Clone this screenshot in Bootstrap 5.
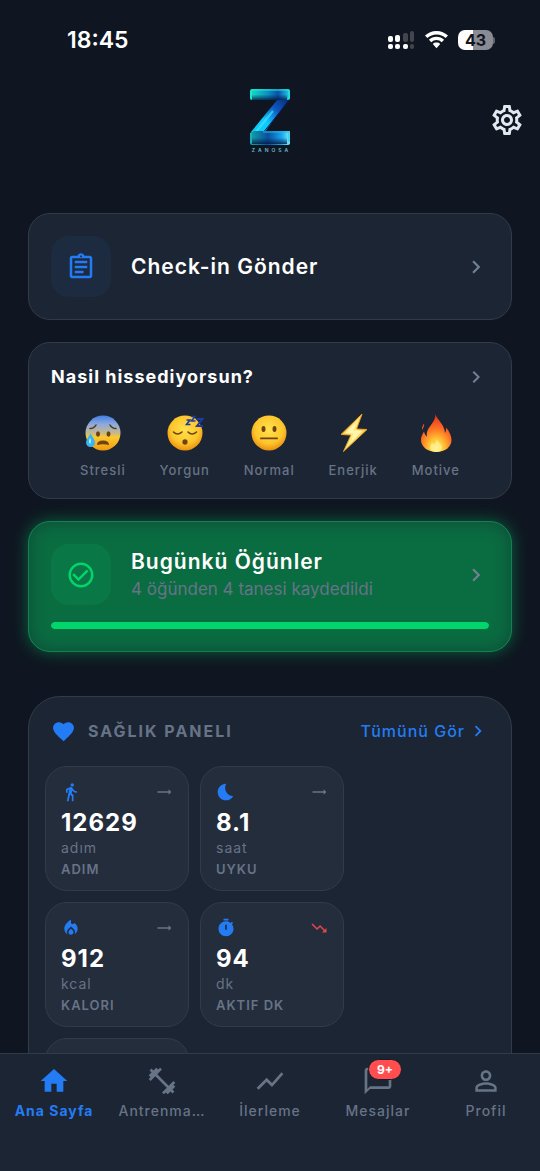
<!DOCTYPE html>
<html lang="tr">
<head>
<meta charset="utf-8">
<meta name="viewport" content="width=device-width, initial-scale=1">
<title>Zanosa</title>
<link rel="stylesheet" href="https://cdn.jsdelivr.net/npm/bootstrap@5.3.0/dist/css/bootstrap.min.css">
<style>
:root { --page: #0f1621; --panel: #1c2533; --tile: #232d3c; --line: #313c49; --muted: #677387; --blue: #247cf4; --green: #00d66b; }
body { background: var(--page); color: #fff; font-family: Inter, "Liberation Sans", sans-serif; }
a { color: inherit; text-decoration: none; }
svg { display: block; flex: none; fill: currentColor; }
.muted { color: var(--muted); }
.blue { color: var(--blue); }
.status { height: 80px; padding: 0 45px 0 67px; font-size: 23px; font-weight: 600; }
.battery { width: 35px; height: 20px; border-radius: 7px; background: linear-gradient(90deg, #fff 43%, #8b8c93 43%); color: #10161f; font-size: 16px; line-height: 20px; font-weight: 700; text-align: center; }
.nub { width: 2px; height: 7px; border-radius: 0 3px 3px 0; background: #60636b; }
.topbar { height: 80px; padding: 0 15px; }
.brand-name { font-size: 5px; line-height: 6px; letter-spacing: 3px; padding-left: 3px; color: #6fbccb; font-weight: 600; }
.gear { color: #e3e7f0; background: none; border: 0; padding: 0; }
main { padding: 53px 28px 0; scrollbar-width: none; }
main::-webkit-scrollbar { display: none; }
.box { display: block; background: var(--panel); border: 1px solid var(--line); border-radius: 22px; padding: 22px; }
.gap-box { gap: 22px; }
.glyph { width: 60px; height: 61px; border-radius: 18px; background: #1c2b40; color: var(--blue); }
.gap-glyph { gap: 20px; }
.go { color: #728095; }
.title { font-size: 21px; line-height: 28px; font-weight: 600; letter-spacing: 1px; }
.feel { padding-bottom: 20px; }
.ask { font-size: 18px; line-height: 24px; font-weight: 700; letter-spacing: 1px; }
.moods { margin-top: 26px; padding: 0 29px; }
.mood { background: none; border: 0; padding: 0; font-size: 13px; line-height: 16px; font-weight: 500; letter-spacing: 1px; color: var(--muted); gap: 11px; }
.meals { background: #0a6c41; border-color: #118350; box-shadow: 0 0 16px rgba(0,214,107,.4), inset 0 0 16px rgba(20,50,50,.6); }
.meals .glyph { background: #0a7846; color: var(--green); }
.sub { font-size: 17px; line-height: 26px; }
.meals .progress { height: 7px; margin-top: 17px; border-radius: 4px; background: #0d5b3a; }
.meals .progress-bar { background: var(--green); border-radius: 4px; }
.health { border-radius: 32px; padding: 16px; margin-top: 22px; }
.health-head { height: 36px; margin-bottom: 17px; padding: 0 6px; }
.health-title { font-size: 16px; line-height: 24px; font-weight: 700; letter-spacing: 2px; margin: 0; }
.all { font-size: 16px; line-height: 24px; font-weight: 500; letter-spacing: 1px; gap: 2px; }
.tiles { gap: 11px; }
.stat { width: 144px; height: 125px; background: var(--tile); border: 1px solid var(--line); border-radius: 22px; padding: 15px; }
.num { font-size: 24px; line-height: 32px; font-weight: 700; letter-spacing: 1px; margin-top: 5px; }
.unit { font-size: 14px; line-height: 18px; letter-spacing: 1px; }
.kind { font-size: 13px; line-height: 18px; margin-top: 3px; font-weight: 600; letter-spacing: 1px; }
.tabs { height: 118px; background: var(--panel); border-top: 1px solid var(--line); padding-top: 11px; }
.tab { flex: 1 1 0; min-width: 0; color: var(--muted); font-size: 14px; line-height: 18px; font-weight: 500; letter-spacing: 1px; gap: 5px; padding: 0 8px; }
.tab.active { color: var(--blue); font-weight: 700; }
.count { position: absolute; left: 6px; top: -6px; height: 21px; padding: 0 8px; border: 1px solid #161c28; border-radius: 11px; background: #ff4d50; color: #fff; font-size: 12px; line-height: 19px; font-weight: 700; letter-spacing: 0; }
</style>
</head>
<body>
<div class="vh-100 d-flex flex-column overflow-hidden">
  <div class="status d-flex align-items-center justify-content-between flex-shrink-0">
    <span>18:45</span>
    <div class="d-flex align-items-center">
      <svg width="27" height="20" viewBox="0 0 27 20"><g><rect x="0" y="6" width="5" height="6" rx="2"/><rect x="7" y="5" width="5" height="7" rx="2"/><rect x="0" y="14" width="5" height="5" rx="2"/><rect x="7" y="14" width="5" height="5" rx="2"/><rect x="15" y="14" width="5" height="5" rx="2"/></g><g fill="#41464f"><rect x="15" y="3" width="5" height="9" rx="2"/><rect x="22" y="1" width="4" height="11" rx="2"/><rect x="22" y="14" width="4" height="5" rx="2"/></g></svg>
      <svg class="ms-2 me-2" width="27" height="20" viewBox="0 0 27 20"><path d="M13.500 1C9 1 5 2.700 2 5.600l2.400 2.500a13 13 0 0 1 18.200 0L25 5.600C22 2.700 18 1 13.500 1zM13.500 6.700c-3 0-5.600 1.200-7.600 3.100l2.400 2.400a7.500 7.500 0 0 1 10.400 0l2.400-2.400c-2-1.900-4.600-3.100-7.600-3.100zM13.500 12.500c-1.500 0-2.700.5-3.700 1.400l3.700 4.400 3.700-4.400c-1-.9-2.200-1.400-3.700-1.400z"/></svg>
      <span class="battery">43</span><span class="nub ms-auto"></span>
    </div>
  </div>

  <header class="topbar d-flex align-items-center flex-shrink-0">
    <div class="col"></div>
    <div class="d-flex flex-column align-items-center">
      <svg width="42" height="59" viewBox="0 0 42 59">
        <defs>
          <linearGradient id="zt"><stop offset="0" stop-color="#16e0c4"/><stop offset=".45" stop-color="#0c8fc0"/><stop offset=".7" stop-color="#0b50a8"/><stop offset="1" stop-color="#22d3f2"/></linearGradient>
          <linearGradient id="zd" x1="0" y1="1" x2="1" y2="0"><stop offset="0" stop-color="#0ccdf0"/><stop offset=".4" stop-color="#12c8ff"/><stop offset=".7" stop-color="#0d55bd"/><stop offset="1" stop-color="#082a78"/></linearGradient>
          <linearGradient id="zb"><stop offset="0" stop-color="#12a5a5"/><stop offset=".45" stop-color="#0a4fa0"/><stop offset=".8" stop-color="#19a8ee"/><stop offset="1" stop-color="#7ff0ff"/></linearGradient>
          <linearGradient id="zs" x1="0" y1="0" x2="0" y2="1"><stop offset=".3" stop-color="#03143d" stop-opacity="0"/><stop offset="1" stop-color="#03143d" stop-opacity=".8"/></linearGradient>
        </defs>
        <path fill="url(#zd)" d="M29 11h11L15 45 2 49v-5z"/>
        <path fill="none" stroke="#0a1a58" stroke-width="1" d="M39 14 13 46"/>
        <path fill="none" stroke="#39e6ff" stroke-opacity=".7" stroke-width="2" d="M24 23 6 45"/>
        <rect x="1" y="1" width="40" height="11" rx="2" fill="url(#zt)"/>
        <rect x="3" y="4" width="35" height="8" fill="url(#zs)"/>
        <path fill="none" stroke="#1ff0d8" d="M2 11V3q0-1 1-1h36q1 0 1 1v8"/>
        <path fill="url(#zb)" d="M5 43h35q1 0 1 1v11q0 2-2 2H3q-2 0-2-2V45z"/>
        <path fill="url(#zs)" d="M3 47h35v9H3z"/>
        <path fill="none" stroke="#20b9dd" d="M14 44h26v10M2 45v10"/>
      </svg>
      <span class="brand-name">ZANOSA</span>
    </div>
    <div class="col d-flex justify-content-end">
      <button class="gear" type="button" aria-label="Ayarlar"><svg width="36" height="36" viewBox="0 0 24 24"><path d="M19.430 12.980c.04-.32.07-.64.07-.98 0-.34-.03-.66-.07-.98l2.110-1.650c.19-.15.24-.42.12-.64l-2-3.460c-.09-.16-.26-.25-.44-.25-.06 0-.12.01-.17.03l-2.490 1c-.52-.4-1.080-.73-1.690-.98l-.38-2.650C14.460 2.180 14.250 2 14 2h-4c-.25 0-.46.18-.49.42l-.38 2.650c-.61.25-1.170.59-1.690.98l-2.490-1c-.06-.02-.12-.03-.18-.03-.17 0-.34.09-.43.25l-2 3.460c-.13.22-.07.49.12.64l2.110 1.650c-.04.32-.07.65-.07.98 0 .33.03.66.07.98l-2.110 1.650c-.19.15-.24.42-.12.64l2 3.460c.09.16.26.25.44.25.06 0 .12-.01.17-.03l2.490-1c.52.4 1.080.73 1.690.98l.38 2.650c.03.24.24.42.49.42h4c.25 0 .46-.18.49-.42l.38-2.650c.61-.25 1.170-.59 1.690-.98l2.490 1c.06.02.12.03.18.03.17 0 .34-.09.43-.25l2-3.460c.12-.22.07-.49-.12-.64l-2.110-1.650zm-1.980-1.710c.04.31.05.52.05.73 0 .21-.02.43-.05.73l-.14 1.130.89.7 1.080.84-.7 1.210-1.270-.51-1.040-.42-.9.68c-.43.32-.84.56-1.250.73l-1.060.43-.16 1.130-.2 1.350h-1.400l-.19-1.350-.16-1.130-1.060-.43c-.43-.18-.83-.41-1.230-.71l-.91-.7-1.060.43-1.270.51-.7-1.210 1.080-.84.89-.7-.14-1.130c-.03-.31-.05-.54-.05-.74s.02-.43.05-.73l.14-1.130-.89-.7-1.080-.84.7-1.210 1.270.51 1.040.42.9-.68c.43-.32.84-.56 1.250-.73l1.060-.43.16-1.130.2-1.350h1.390l.19 1.350.16 1.130 1.060.43c.43.18.83.41 1.230.71l.91.7 1.060-.43 1.270-.51.7 1.210-1.070.85-.89.7.14 1.130zM12 8c-2.210 0-4 1.790-4 4s1.790 4 4 4 4-1.790 4-4-1.790-4-4-4zm0 6c-1.100 0-2-.9-2-2s.9-2 2-2 2 .9 2 2-.9 2-2 2z"/></svg></button>
    </div>
  </header>

  <main class="flex-grow-1 overflow-auto">
    <div class="d-flex flex-column gap-box">
      <a href="#" class="box">
        <div class="d-flex align-items-center gap-glyph">
          <span class="glyph d-flex align-items-center justify-content-center"><svg width="30" height="30" viewBox="0 0 24 24"><path d="M7 15h7v2H7zm0-4h10v2H7zm0-4h10v2H7zm12-4h-4.180C14.400 1.840 13.300 1 12 1c-1.300 0-2.400.84-2.820 2H5c-.14 0-.27.01-.4.04-.39.08-.74.28-1.010.55-.18.18-.33.4-.43.64-.1.23-.16.49-.16.77v14c0 .27.06.54.16.78s.25.45.43.64c.27.27.62.47 1.010.55.13.02.26.03.4.03h14c1.100 0 2-.9 2-2V5c0-1.100-.9-2-2-2zm-7-.25c.41 0 .75.34.75.75s-.34.75-.75.75-.75-.34-.75-.75.34-.75.75-.75zM19 19H5V5h14v14z"/></svg></span>
          <span class="title flex-grow-1">Check-in Gönder</span>
          <svg class="go" width="26" height="26" viewBox="0 0 24 24"><path d="M10 6 8.590 7.410 13.170 12l-4.580 4.590L10 18l6-6z"/></svg>
        </div>
      </a>

      <section class="box feel">
        <a href="#" class="ask d-flex align-items-center justify-content-between"><span>Nasil hissediyorsun?</span>
          <svg class="go" width="26" height="24" viewBox="0 0 24 24"><path d="M10 6 8.590 7.410 13.170 12l-4.580 4.590L10 18l6-6z"/></svg></a>
        <svg width="0" height="0" class="position-absolute"><defs>
          <radialGradient id="face" cx=".5" cy=".4" r=".62"><stop offset="0" stop-color="#ffe14d"/><stop offset=".65" stop-color="#fdc52c"/><stop offset="1" stop-color="#e98a0c"/></radialGradient>
          <linearGradient id="cold" x1="0" y1="0" x2="0" y2="1"><stop offset="0" stop-color="#3f7fe8"/><stop offset=".25" stop-color="#8fa9dc"/><stop offset=".5" stop-color="#c5b88e"/><stop offset=".62" stop-color="#fdc92f"/><stop offset="1" stop-color="#f2980e"/></linearGradient>
          <linearGradient id="bolt" x1="0" y1="0" x2="1" y2="1"><stop offset="0" stop-color="#f7a81b"/><stop offset=".5" stop-color="#fff08a"/><stop offset="1" stop-color="#f29a15"/></linearGradient>
          <radialGradient id="fire" cx=".5" cy=".9" r=".85"><stop offset="0" stop-color="#fff27a"/><stop offset=".3" stop-color="#ffc234"/><stop offset=".6" stop-color="#ff7424"/><stop offset="1" stop-color="#e8321f"/></radialGradient>
        </defs></svg>
        <div class="moods d-flex justify-content-between">
          <button type="button" class="mood d-flex flex-column align-items-center">
            <svg width="36" height="36" viewBox="0 0 36 36"><circle cx="18" cy="18" r="17.500" fill="url(#cold)"/><g fill="none" stroke="#4b3a26" stroke-width="1.500" stroke-linecap="round"><path d="M5 13.500q4 0 6-3.500M25 10q2 3.500 6 3.500"/></g><g fill="#6d4310"><ellipse cx="13" cy="19" rx="2" ry="2.700"/><ellipse cx="23.500" cy="19" rx="2" ry="2.700"/><path d="M12 30q0-4.500 6-4.500t6 4.500q-6-1.500-12 0z"/></g><path fill="#39b5ef" d="M5.500 18.500q4.500 6.500 4.500 9a4.500 4.500 0 0 1-9 0q0-2.500 4.500-9z"/><path fill="#b8ecff" d="M5 23q-2 4 0 6 2-3 0-6z"/></svg>
            Stresli</button>
          <button type="button" class="mood d-flex flex-column align-items-center">
            <svg width="36" height="36" viewBox="0 0 36 36" overflow="visible"><circle cx="18" cy="18" r="17.500" fill="url(#face)"/><g fill="none" stroke="#6d4310" stroke-width="1.600" stroke-linecap="round"><path d="M6.500 17q4 4 8.500 0M21 17q4 4 8.500 0"/></g><ellipse cx="18" cy="27" rx="2.600" ry="2.800" fill="#6d4310"/><g fill="none" stroke="#1a3aa5"><path stroke-width="1.600" d="M19.500 5H23l-3.500 4.500H23.500"/><path stroke-width="1.500" d="M24.500 1.500H28l-3.500 4.500H28.500"/><path stroke-width="2" d="M29.500 4h6L30 11h6"/></g></svg>
            Yorgun</button>
          <button type="button" class="mood d-flex flex-column align-items-center">
            <svg width="36" height="36" viewBox="0 0 36 36"><circle cx="18" cy="18" r="17.500" fill="url(#face)"/><g fill="#6d4310"><ellipse cx="12.500" cy="14" rx="2" ry="3"/><ellipse cx="23.500" cy="14" rx="2" ry="3"/><rect x="9" y="22.500" width="18" height="1.800" rx=".9"/></g></svg>
            Normal</button>
          <button type="button" class="mood d-flex flex-column align-items-center">
            <svg width="36" height="36" viewBox="0 0 36 36" overflow="visible"><path fill="url(#bolt)" stroke="#f0a020" stroke-width="1" stroke-linejoin="round" d="M27-1 6 19.500 16 20 8.500 36.500 32 14.500 21.500 14z"/><path fill="#fff6b0" d="M23 5 10 18l9 .5-4 10 12-12.500h-9z"/></svg>
            Enerjik</button>
          <button type="button" class="mood d-flex flex-column align-items-center">
            <svg width="36" height="36" viewBox="0 0 36 36" overflow="visible"><path fill="url(#fire)" d="M17.500-1C18 4 26.500 9 27 18c1-1.500 1.200-3.500 1-5.500 3.500 4 5.500 8.500 5.500 12.500 0 7-6.500 12-15 12S3 32 3 25c0-3.500 1.500-6 3-8.500.5 2.500 1.500 4 3 5C7.500 12 17.500 9 17.500-1zM5.500 8.500c2 2-1 4.500-1 6.500-1.500-3 1-4 1-6.500z"/><path fill="#fff39a" opacity=".7" d="M19 24c0 3 5 5 5 8.500S21 37 18 37s-6-1.500-6-4.500c0-2 1.500-3 2-5 1 1 1.500 1.500 2 2.500 1.500-1.500 2.500-3 3-6z"/></svg>
            Motive</button>
        </div>
      </section>

      <a href="#" class="box meals">
        <div class="d-flex align-items-center gap-glyph">
          <span class="glyph d-flex align-items-center justify-content-center"><svg width="30" height="30" viewBox="0 0 24 24"><path d="M16.590 7.580 10 14.170l-3.590-3.580L5 12l5 5 8-8zM12 2C6.480 2 2 6.480 2 12s4.480 10 10 10 10-4.480 10-10S17.520 2 12 2zm0 18c-4.420 0-8-3.580-8-8s3.580-8 8-8 8 3.580 8 8-3.580 8-8 8z"/></svg></span>
          <span class="flex-grow-1"><span class="title d-block">Bugünkü Öğünler</span><span class="sub muted d-block">4 öğünden 4 tanesi kaydedildi</span></span>
          <svg class="go" width="26" height="26" viewBox="0 0 24 24"><path d="M10 6 8.590 7.410 13.170 12l-4.580 4.590L10 18l6-6z"/></svg>
        </div>
        <div class="progress" role="progressbar" aria-label="Öğünler" aria-valuenow="4" aria-valuemin="0" aria-valuemax="4"><div class="progress-bar w-100"></div></div>
      </a>

      <section class="box health">
        <div class="health-head d-flex align-items-center">
          <svg class="blue" width="25" height="25" viewBox="0 0 24 24"><path d="M12 21.350l-1.450-1.320C5.400 15.360 2 12.280 2 8.500 2 5.420 4.420 3 7.500 3c1.740 0 3.410.81 4.500 2.090C13.090 3.810 14.760 3 16.500 3 19.580 3 22 5.420 22 8.500c0 3.780-3.400 6.860-8.550 11.540L12 21.350z"/></svg>
          <h2 class="health-title muted ms-2 ps-1">SAĞLIK PANELI</h2>
          <a href="#" class="all blue ms-auto d-flex align-items-center">Tümünü Gör
            <svg width="22" height="22" viewBox="0 0 24 24"><path d="M10 6 8.590 7.410 13.170 12l-4.580 4.590L10 18l6-6z"/></svg></a>
        </div>
        <div class="tiles d-flex flex-wrap">
          <div class="stat">
            <div class="d-flex align-items-center justify-content-between"><svg class="blue" width="20" height="20" viewBox="0 0 24 24"><path d="M13.500 5.500c1.100 0 2-.9 2-2s-.9-2-2-2-2 .9-2 2 .9 2 2 2zM9.800 8.900 7 23h2.100l1.800-8 2.100 2v6h2v-7.500l-2.100-2 .6-3C14.800 12 16.800 13 19 13v-2c-1.900 0-3.500-1-4.300-2.400l-1-1.600c-.4-.6-1-1-1.700-1-.3 0-.5.1-.8.1L6 8.300V13h2V9.600l1.800-.7"/></svg>
              <svg class="muted" width="18" height="18" viewBox="0 0 24 24"><path d="M21.650 11.650l-2.790-2.790c-.32-.32-.86-.1-.86.35V11H4c-.55 0-1 .45-1 1s.45 1 1 1h14v1.790c0 .45.54.67.85.35l2.790-2.790c.2-.19.2-.51.01-.7z"/></svg></div>
            <div class="num">12629</div><div class="unit muted">adım</div><div class="kind muted">ADIM</div>
          </div>
          <div class="stat">
            <div class="d-flex align-items-center justify-content-between"><svg class="blue" width="20" height="20" viewBox="0 0 24 24"><path d="M12.340 2.020C6.590 1.820 2 6.420 2 12c0 5.520 4.480 10 10 10 3.710 0 6.930-2.020 8.660-5.020-7.510-.25-12.090-8.430-8.320-14.960z"/></svg>
              <svg class="muted" width="18" height="18" viewBox="0 0 24 24"><path d="M21.650 11.650l-2.790-2.790c-.32-.32-.86-.1-.86.35V11H4c-.55 0-1 .45-1 1s.45 1 1 1h14v1.790c0 .45.54.67.85.35l2.790-2.790c.2-.19.2-.51.01-.7z"/></svg></div>
            <div class="num">8.1</div><div class="unit muted">saat</div><div class="kind muted">UYKU</div>
          </div>
          <div class="stat">
            <div class="d-flex align-items-center justify-content-between"><svg class="blue" width="20" height="20" viewBox="0 0 24 24"><path d="M16 6l-.44.55C14.380 8.020 12 7.190 12 5.300V2S4 6 4 13c0 2.920 1.560 5.470 3.890 6.860-.56-.79-.89-1.760-.89-2.800 0-1.320.52-2.560 1.470-3.500L12 10.100l3.530 3.470c.95.93 1.470 2.170 1.470 3.500 0 1.020-.31 1.960-.85 2.750 1.890-1.150 3.290-3.060 3.710-5.300.66-3.550-1.070-6.900-3.860-8.520zM12 12.900l-2.130 2.090c-.56.56-.87 1.290-.87 2.070C9 18.680 10.350 20 12 20s3-1.320 3-2.940c0-.78-.31-1.520-.87-2.070L12 12.900z"/></svg>
              <svg class="muted" width="18" height="18" viewBox="0 0 24 24"><path d="M21.650 11.650l-2.790-2.790c-.32-.32-.86-.1-.86.35V11H4c-.55 0-1 .45-1 1s.45 1 1 1h14v1.790c0 .45.54.67.85.35l2.790-2.790c.2-.19.2-.51.01-.7z"/></svg></div>
            <div class="num">912</div><div class="unit muted">kcal</div><div class="kind muted">KALORI</div>
          </div>
          <div class="stat">
            <div class="d-flex align-items-center justify-content-between"><svg class="blue" width="20" height="20" viewBox="0 0 24 24"><path d="M15 1H9v2h6V1zm4.030 6.390 1.420-1.420c-.43-.51-.9-.99-1.410-1.410l-1.420 1.420C16.070 4.740 14.120 4 12 4c-4.970 0-9 4.030-9 9s4.020 9 9 9 9-4.030 9-9c0-2.120-.74-4.070-1.970-5.610zM13 14h-2V8h2v6z"/></svg>
              <svg width="18" height="18" viewBox="0 0 24 24"><path fill="#e5484d" d="M16 18l2.290-2.290-4.880-4.880-4 4L2 7.410 3.410 6l6 6 4-4 6.300 6.290L22 12v6z"/></svg></div>
            <div class="num">94</div><div class="unit muted">dk</div><div class="kind muted">AKTIF DK</div>
          </div>
          <div class="stat"></div>
        </div>
      </section>
    </div>
  </main>

  <nav class="tabs d-flex flex-shrink-0">
    <a href="#" class="tab active d-flex flex-column align-items-center"><svg width="32" height="32" viewBox="0 0 24 24"><path d="M10 20v-6h4v6h5v-8h3L12 3 2 12h3v8z"/></svg><span>Ana Sayfa</span></a>
    <a href="#" class="tab d-flex flex-column align-items-center"><svg width="32" height="32" viewBox="0 0 24 24"><path d="M20.570 14.860L22 13.430 20.570 12 17 15.570 8.430 7 12 3.430 10.570 2 9.140 3.430 7.710 2 5.570 4.140 4.140 2.710 2.710 4.140l1.430 1.430L2 7.710l1.430 1.430L2 10.570 3.430 12 7 8.430 15.570 17 12 20.570 13.430 22l1.430-1.430L16.290 22l2.140-2.140 1.430 1.430 1.430-1.430-1.430-1.430L22 16.290z"/></svg><span>Antrenma…</span></a>
    <a href="#" class="tab d-flex flex-column align-items-center"><svg width="32" height="32" viewBox="0 0 24 24"><path d="M3.500 18.490l6-6.010 4 4L22 6.920l-1.410-1.410-7.090 7.970-4-4L2 16.990z"/></svg><span>İlerleme</span></a>
    <a href="#" class="tab d-flex flex-column align-items-center"><span class="position-relative"><svg width="32" height="32" viewBox="0 0 24 24"><path d="M20 2H4c-1.100 0-2 .9-2 2v18l4-4h14c1.100 0 2-.9 2-2V4c0-1.100-.9-2-2-2zm0 14H6l-2 2V4h16v12z"/></svg><span class="count">9+</span></span><span>Mesajlar</span></a>
    <a href="#" class="tab d-flex flex-column align-items-center"><svg width="32" height="32" viewBox="0 0 24 24"><path d="M12 5.900c1.160 0 2.100.94 2.100 2.100s-.94 2.100-2.100 2.100S9.900 9.160 9.900 8s.94-2.100 2.100-2.100m0 9c2.970 0 6.100 1.460 6.100 2.100v1.100H5.900V17c0-.64 3.130-2.100 6.100-2.100M12 4C9.790 4 8 5.790 8 8s1.790 4 4 4 4-1.790 4-4-1.790-4-4-4zm0 9c-2.670 0-8 1.340-8 4v3h16v-3c0-2.660-5.330-4-8-4z"/></svg><span>Profil</span></a>
  </nav>
</div>
<script src="https://cdn.jsdelivr.net/npm/bootstrap@5.3.0/dist/js/bootstrap.bundle.min.js"></script>
</body>
</html>
